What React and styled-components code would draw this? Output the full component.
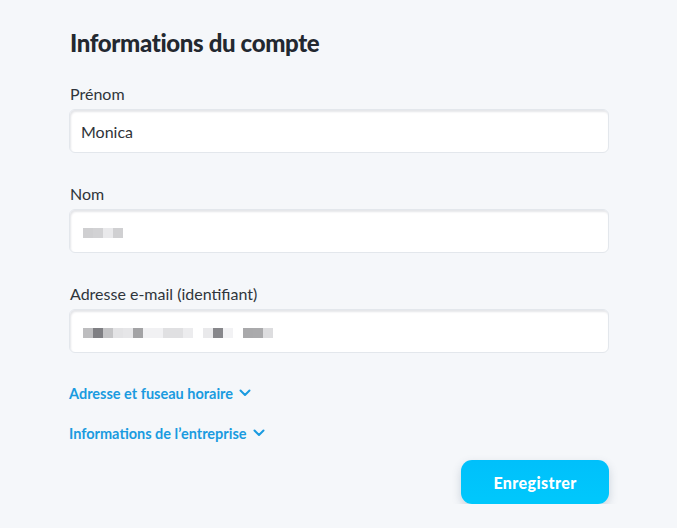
import React from "react";
import styled, { createGlobalStyle } from "styled-components";

const GlobalStyle = createGlobalStyle`
  body {
    margin: 0;
    background: #f5f7fa;
    font-family: "Lato", "Noto Sans", sans-serif;
    color: #2b3036;
  }
`;

// components
const Page = styled.div`
  width: 540px;
  padding: 28px 0 0 69px;
  display: flex;
  flex-direction: column;
`;

const Title = styled.h1`
  margin: 0 0 26px 1px;
  font-size: 24px;
  line-height: 30px;
  font-weight: 900;
  color: #232830;
  letter-spacing: -0.35px;
`;

const Field = styled.div`
  display: flex;
  flex-direction: column;
  margin-bottom: 31px;
`;

const Label = styled.label`
  font-size: 16px;
  line-height: 20px;
  margin: 0 0 5px 1px;
  color: #2f353b;
`;

const InputBox = styled.div`
  box-sizing: border-box;
  height: 44px;
  background: #fff;
  border: 1px solid #e3e7ec;
  border-radius: 6px;
  box-shadow: inset 1px 2px 2px rgba(40, 50, 70, 0.12);
  display: flex;
  align-items: center;
  padding: 0 11px;
  font-size: 16px;
  color: #2f3338;
`;

const Redacted = styled.div`
  display: flex;
  margin: 4px 0 0 2px;
`;

const Cell = styled.span`
  width: 10px;
  height: 10px;
  background: ${p => p.$tone};
`;

const Toggle = styled.button`
  display: flex;
  align-items: center;
  gap: 6px;
  padding: 0;
  border: none;
  background: none;
  font-family: inherit;
  font-size: 14.5px;
  font-weight: 700;
  color: #1a9be0;
  margin: ${p => (p.$first ? "0" : "22px")} 0 0 0;
  height: 18px;
  cursor: pointer;
`;

const Footer = styled.div`
  display: flex;
  justify-content: flex-end;
  margin-top: 18px;
`;

const SaveButton = styled.button`
  width: 148px;
  height: 44px;
  border: none;
  border-radius: 11px;
  background: linear-gradient(180deg, #00c0fb, #00c8fc);
  box-shadow: 0 4px 10px rgba(60, 80, 110, 0.22);
  color: #fff;
  font-family: inherit;
  font-weight: 900;
  font-size: 16px;
  letter-spacing: 0.4px;
`;

const Chevron = () => (
  <svg width="12" height="8" viewBox="0 0 12 8" fill="none">
    <path d="M1.5 1.5 L6 6 L10.5 1.5" stroke="#1a9be0" strokeWidth="2" strokeLinecap="round" strokeLinejoin="round" />
  </svg>
);

const nomCells = ["#cfcfd1", "#d2d2d4", "#e9e9eb", "#d0d0d2"];
const mailCells = [
  "#bdbdbf", "#7f7f83", "#c4c4c6", "#e3e3e5", "#e6e6e8", "#a3a3a5", "#f1f1f3", "#f1f1f3",
  "#e0e0e2", "#e0e0e2", "#ececee", null, "#e9e9eb", "#87878b", "#f2f2f4", null,
  "#a9a9ab", "#aaaaac", "#dddddf",
];

function App() {
  return (
    <>
      <GlobalStyle />
      <Page>
        <Title>Informations du compte</Title>
        <Field>
          <Label>Prénom</Label>
          <InputBox>Monica</InputBox>
        </Field>
        <Field>
          <Label>Nom</Label>
          <InputBox>
            <Redacted>
              {nomCells.map((c, i) => (
                <Cell key={i} $tone={c} />
              ))}
            </Redacted>
          </InputBox>
        </Field>
        <Field>
          <Label>Adresse e-mail (identifiant)</Label>
          <InputBox>
            <Redacted>
              {mailCells.map((c, i) => (
                <Cell key={i} $tone={c || "transparent"} />
              ))}
            </Redacted>
          </InputBox>
        </Field>
        <Toggle $first>
          Adresse et fuseau horaire <Chevron />
        </Toggle>
        <Toggle>
          Informations de l’entreprise <Chevron />
        </Toggle>
        <Footer>
          <SaveButton>Enregistrer</SaveButton>
        </Footer>
      </Page>
    </>
  );
}

export default App;
